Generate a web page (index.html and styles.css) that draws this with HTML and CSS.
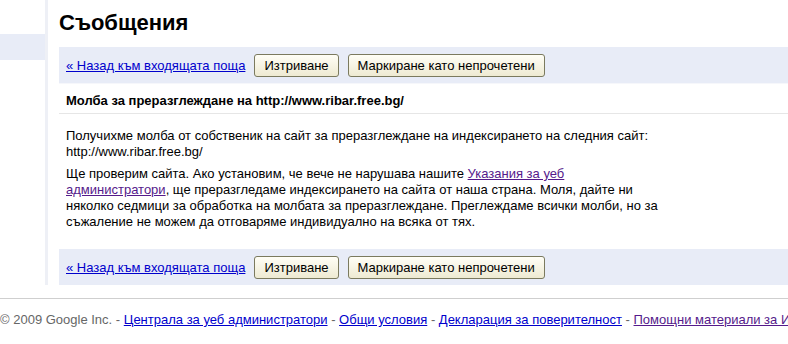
FILE: index.html
```html
<!DOCTYPE html>
<html lang="bg">
<head>
    <meta charset="UTF-8">
    <title>Съобщения</title>
    <link rel="stylesheet" href="styles.css">
</head>
<body>
    <div class="page">
        <div class="sidebar">
            <div class="sidebar-item"></div>
        </div>

        <main class="main">
            <h1>Съобщения</h1>

            <!-- Top toolbar -->
            <div class="toolbar">
                <a href="#">« Назад към входящата поща</a>
                <button>Изтриване</button>
                <button>Маркиране като непрочетени</button>
            </div>

            <div class="msg-title">Молба за преразглеждане на http://www.ribar.free.bg/</div>

            <div class="msg-body">
                <p>Получихме молба от собственик на сайт за преразглеждане на индексирането на следния сайт:<br>http://www.ribar.free.bg/</p>
                <p>Ще проверим сайта. Ако установим, че вече не нарушава нашите <a href="#" class="visited">Указания за уеб администратори</a>, ще преразгледаме индексирането на сайта от наша страна. Моля, дайте ни няколко седмици за обработка на молбата за преразглеждане. Преглеждаме всички молби, но за съжаление не можем да отговаряме индивидуално на всяка от тях.</p>
            </div>

            <!-- Bottom toolbar -->
            <div class="toolbar">
                <a href="#">« Назад към входящата поща</a>
                <button>Изтриване</button>
                <button>Маркиране като непрочетени</button>
            </div>
        </main>
    </div>

    <footer>
        © 2009 Google Inc. - <a href="#">Централа за уеб администратори</a> - <a href="#">Общи условия</a> - <a href="#">Декларация за поверителност</a> - <a href="#" class="visited">Помощни материали за Интернет администратори</a>
    </footer>
</body>
</html>
```

FILE: styles.css
```css
/* General Styles */
body {
    margin: 0;
    font-family: 'Liberation Sans', Arial, sans-serif;
    font-size: 13px;
    color: #000;
    background: #fff;
    overflow: hidden;
}
a {
    color: #0000cc;
}
a.visited {
    color: #551a8b;
}
.page {
    display: flex;
}
/* Sidebar */
.sidebar {
    width: 45px;
    border-right: 3px solid #eef0f6;
    padding-top: 34px;
}
.sidebar-item {
    height: 26px;
    background: #e8ecf7;
}
/* Main column */
.main {
    flex: 1;
    padding-left: 11px;
}
h1 {
    margin: 0;
    height: 47px;
    font-size: 22px;
    line-height: 46px;
    font-weight: bold;
}
.toolbar {
    display: flex;
    align-items: center;
    height: 36px;
    padding: 0 7px;
    background: #e8ecf7;
    white-space: nowrap;
}
.toolbar a {
    margin-right: 9px;
}
.toolbar button {
    height: 23px;
    margin-right: 9px;
    padding: 0 9px;
    font-family: inherit;
    font-size: 13px;
    color: #000;
    background: linear-gradient(#fffef6, #eeead2);
    border: 1px solid #7b7a5e;
    border-radius: 3px;
}
.msg-title {
    padding: 7px 7px 0;
    height: 22px;
    line-height: 20px;
    font-weight: bold;
    border-top: 1px solid #f6f7fb;
    border-bottom: 1px solid #e6e6e6;
}
.msg-body {
    height: 121px;
    padding: 14px 7px 0;
    line-height: 16px;
}
.msg-body p {
    max-width: 596px;
    margin: 0;
}
.msg-body p + p {
    margin-top: 6px;
}
/* Footer */
footer {
    margin-top: 13px;
    border-top: 1px solid #cfcfcf;
    padding-top: 13px;
    color: #666;
    white-space: nowrap;
}
```
